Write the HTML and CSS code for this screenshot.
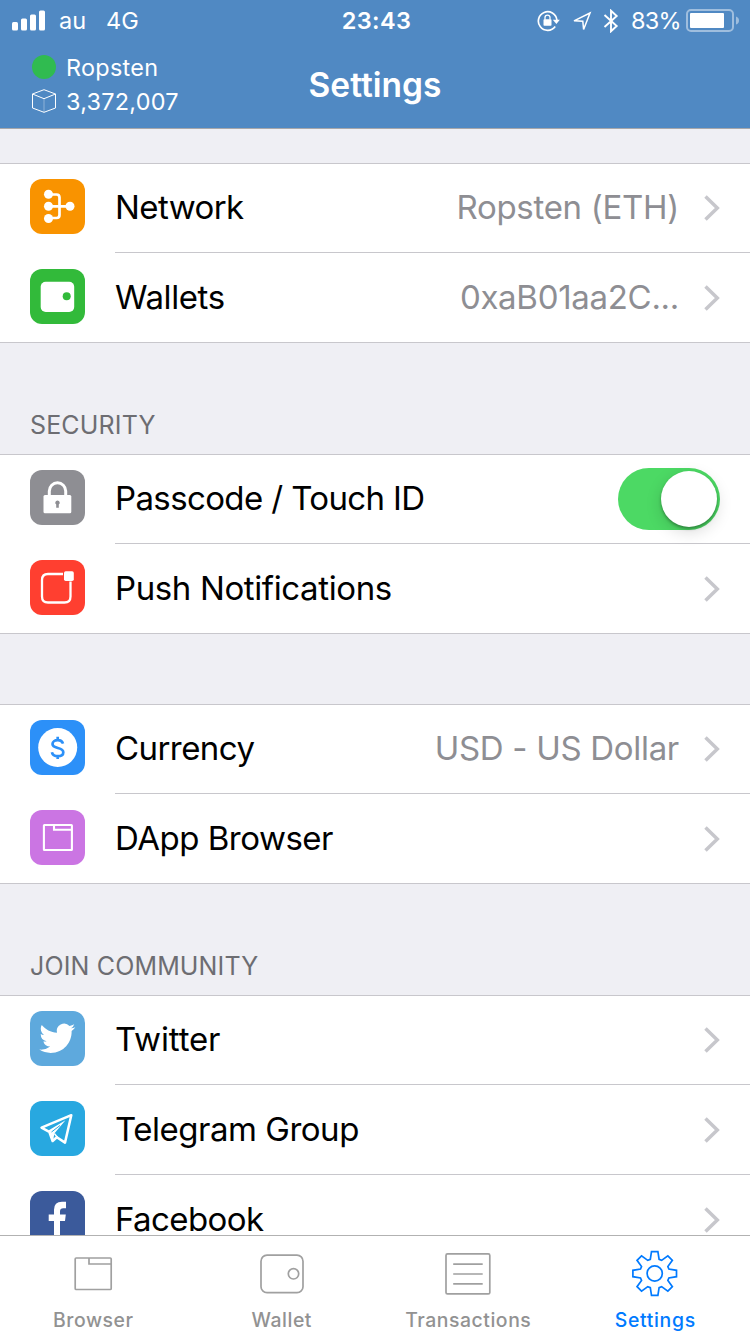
FILE: index.html
```html
<!DOCTYPE html>
<html lang="en">
<head>
<meta charset="utf-8">
<title>Settings</title>
<link rel="stylesheet" href="styles.css">
</head>
<body>
<div class="screen">
  <header class="header">
    <div class="status">
      <div class="status-left">
        <svg class="signal" width="34" height="21" viewBox="0 0 34 21" fill="#fff"><rect x="0" y="12" width="6" height="8.500" rx="1.500"/><rect x="9" y="8.500" width="6" height="12" rx="1.500"/><rect x="18" y="4.500" width="6" height="16" rx="1.500"/><rect x="27" y="0.500" width="6" height="20" rx="1.500"/></svg>
        <span class="carrier">au</span><span class="radio">4G</span>
      </div>
      <span class="clock">23:43</span>
      <div class="status-right">
        <svg class="lock-rot" width="24" height="22" viewBox="0 0 24 22"><path d="M18.200 16.500A9.300 9.300 0 1 1 19.900 10" fill="none" stroke="#fff" stroke-width="1.700"/><path d="M15.800 9.800h7l-3.400 4.200z" fill="#fff"/><rect x="6.500" y="9.300" width="8" height="6.500" rx="0.800" fill="#fff"/><path d="M8 9.800V7.600a2.500 2.500 0 0 1 5 0V9.800" fill="none" stroke="#fff" stroke-width="1.300"/></svg>
        <svg class="arrow" width="20" height="21" viewBox="0 0 20 21" fill="none" stroke="#fff" stroke-width="1.500"><path d="M18 2L2 9.800l8.800.400.800 8.300z"/></svg>
        <svg class="bluetooth" width="16" height="24" viewBox="0 0 16 24" fill="none" stroke="#fff" stroke-width="1.900"><path d="M1.500 6l12.200 11L8 22.300V1.700L13.700 7 1.500 18"/></svg>
        <span class="percent">83%</span>
        <svg class="battery" width="53" height="24" viewBox="0 0 53 24"><rect x="1" y="1" width="46" height="21" rx="4" fill="none" stroke="#fff" stroke-opacity=".45" stroke-width="2"/><rect x="4" y="4" width="34" height="15" rx="1" fill="#fff"/><path d="M50 7.500q3 1 3 4t-3 4z" fill="#fff" fill-opacity=".45"/></svg>
      </div>
    </div>
    <div class="nav">
      <div class="node">
        <div class="node-line"><i class="dot"></i><span class="node-name">Ropsten</span></div>
        <div class="node-line"><svg width="24" height="24" viewBox="0 0 24 24" fill="none" stroke="#fff" stroke-width="1"><path d="M12 .700L23.500 5v14L12 23.300.500 19V5zM.500 5L12 9.700 23.500 5"/><path d="M12 9.700v13.600" stroke-opacity=".35"/></svg><span class="node-block">3,372,007</span></div>
      </div>
      <h1 class="title">Settings</h1>
    </div>
  </header>

  <main class="content">
    <section class="group">
      <div class="row">
        <svg class="icon orange" viewBox="0 0 55 55"><g fill="none" stroke="#fff" stroke-width="2.700"><path d="M18 15.500h8.500q3 0 3 3v17.500q0 3-3 3H18M18 27.300h22"/></g><g fill="#fff"><circle cx="18.500" cy="15.300" r="4.500"/><circle cx="18.500" cy="27.300" r="4.500"/><circle cx="18.500" cy="39.500" r="4.500"/><circle cx="40" cy="27.300" r="4.500"/></g></svg>
        <div class="cell"><span class="label l-network">Network</span><span class="value v-network">Ropsten (ETH)</span><svg class="chevron" viewBox="0 0 16 26"><path d="M1.500 1.500L13.300 13 1.500 24.500"/></svg></div>
      </div>
      <div class="row">
        <svg class="icon green" viewBox="0 0 55 55"><rect x="10.700" y="12.700" width="33.500" height="30.300" rx="5" fill="#fff"/><circle cx="36.700" cy="27.300" r="4" fill="#32ba3a"/></svg>
        <div class="cell"><span class="label l-wallets">Wallets</span><span class="value v-wallets">0xaB01aa2C...</span><svg class="chevron" viewBox="0 0 16 26"><path d="M1.500 1.500L13.300 13 1.500 24.500"/></svg></div>
      </div>
    </section>

    <h2 class="heading h-security">SECURITY</h2>
    <section class="group">
      <div class="row">
        <svg class="icon gray" viewBox="0 0 55 55"><path d="M19.300 27v-6a8.200 8.200 0 0 1 16.400 0v6" fill="none" stroke="#fff" stroke-width="3"/><rect x="13.500" y="25" width="27.800" height="18.200" rx="1.500" fill="#fff"/><path d="M27.500 30.500a2.200 2.200 0 0 1 1.300 4v3.200h-2.600v-3.200a2.200 2.200 0 0 1 1.300-4z" fill="#8e8e93"/></svg>
        <div class="cell"><span class="label l-passcode">Passcode / Touch ID</span><span class="switch"><i class="knob"></i></span></div>
      </div>
      <div class="row">
        <svg class="icon red" viewBox="0 0 55 55"><path d="M33 14H18q-6 0-6 6v16.500q0 6 6 6h16.500q6 0 6-6V21.500" fill="none" stroke="#fff" stroke-width="2.300"/><rect x="34" y="11.300" width="9.800" height="9.600" rx="1.700" fill="#fff"/></svg>
        <div class="cell"><span class="label l-push">Push Notifications</span><svg class="chevron" viewBox="0 0 16 26"><path d="M1.500 1.500L13.300 13 1.500 24.500"/></svg></div>
      </div>
    </section>

    <section class="group spaced">
      <div class="row">
        <svg class="icon blue" viewBox="0 0 55 55"><circle cx="27.700" cy="27.500" r="19.500" fill="#fff"/><path transform="translate(0 2.200)" d="M33 21.500c-.700-2.300-2.600-3.500-5.300-3.500-3 0-5.200 1.500-5.200 3.800 0 5.300 10.800 2.700 10.800 8.200 0 2.500-2.300 4-5.500 4-3.200 0-5.300-1.400-5.900-4M27.700 14.500v3.500M27.700 34v2.700" fill="none" stroke="#2c90f8" stroke-width="2.700"/></svg>
        <div class="cell"><span class="label l-currency">Currency</span><span class="value v-currency">USD - US Dollar</span><svg class="chevron" viewBox="0 0 16 26"><path d="M1.500 1.500L13.300 13 1.500 24.500"/></svg></div>
      </div>
      <div class="row">
        <svg class="icon purple" viewBox="0 0 55 55"><g fill="none" stroke="#fff" stroke-width="2.100"><rect x="13.900" y="15" width="28" height="25" rx=".5"/><path d="M24 15v4.800h17.700"/></g></svg>
        <div class="cell"><span class="label l-dapp">DApp Browser</span><svg class="chevron" viewBox="0 0 16 26"><path d="M1.500 1.500L13.300 13 1.500 24.500"/></svg></div>
      </div>
    </section>

    <h2 class="heading h-community">JOIN COMMUNITY</h2>
    <section class="group">
      <div class="row">
        <svg class="icon twitter" viewBox="0 0 55 55"><path transform="translate(9.300 9.300) scale(1.500)" fill="#fff" d="M23.953 4.570a10 10 0 01-2.825.775 4.958 4.958 0 002.163-2.723c-.951.555-2.005.959-3.127 1.184a4.920 4.920 0 00-8.384 4.482C7.690 8.095 4.067 6.130 1.640 3.162a4.822 4.822 0 00-.666 2.475c0 1.710.870 3.213 2.188 4.096a4.904 4.904 0 01-2.228-.616v.060a4.923 4.923 0 003.946 4.827 4.996 4.996 0 01-2.212.085 4.936 4.936 0 004.604 3.417 9.867 9.867 0 01-6.102 2.105c-.390 0-.779-.023-1.170-.067a13.995 13.995 0 007.557 2.209c9.053 0 13.998-7.496 13.998-13.985 0-.210 0-.420-.015-.630A9.935 9.935 0 0024 4.590z"/></svg>
        <div class="cell"><span class="label l-twitter">Twitter</span><svg class="chevron" viewBox="0 0 16 26"><path d="M1.500 1.500L13.300 13 1.500 24.500"/></svg></div>
      </div>
      <div class="row">
        <svg class="icon telegram" viewBox="0 0 55 55"><path d="M41.300 14.200L11.500 26.600l7.800 4.200 3.300 9.200 4.200-3.700 8.200 5.300z" fill="none" stroke="#fff" stroke-width="2.500" stroke-linejoin="round"/><path d="M18.800 29.300L35.500 19.200 24.300 32.500 23 40.500z" fill="#fff"/><path d="M24.300 32.500l3.300 4" stroke="#fff" stroke-width="1.500"/><path d="M21.500 31l8.500-6.500" stroke="#28a8e0" stroke-width="1"/></svg>
        <div class="cell"><span class="label l-telegram">Telegram Group</span><svg class="chevron" viewBox="0 0 16 26"><path d="M1.500 1.500L13.300 13 1.500 24.500"/></svg></div>
      </div>
      <div class="row">
        <svg class="icon facebook" viewBox="0 0 55 55"><path d="M24 55V30h-5.300v-6.500H24v-4.700q0-8 8-8h4v6.400h-2.700q-3.300 0-3.300 3v3.300h5.800L35 30h-5v25z" fill="#fff"/></svg>
        <div class="cell"><span class="label l-facebook">Facebook</span><svg class="chevron" viewBox="0 0 16 26"><path d="M1.500 1.500L13.300 13 1.500 24.500"/></svg></div>
      </div>
    </section>
  </main>

  <nav class="tabs">
    <div class="tab"><svg width="48" height="48" viewBox="0 0 48 48"><rect x="5.200" y="8" width="36" height="31.500" rx="1"/><path d="M19 8v6h22.300"/></svg><span class="t-browser">Browser</span></div>
    <div class="tab"><svg width="48" height="48" viewBox="0 0 48 48"><rect x="4" y="5.200" width="42" height="37.500" rx="6"/><circle cx="36.500" cy="23.800" r="5.200"/></svg><span class="t-wallet">Wallet</span></div>
    <div class="tab"><svg width="48" height="48" viewBox="0 0 48 48"><rect x="1" y="3.900" width="43.800" height="40" rx="1.500"/><path d="M8.200 14.200h29.500M8.200 24h29.500M8.200 33.800h29.500"/></svg><span class="t-transactions">Transactions</span></div>
    <div class="tab active"><svg width="48" height="48" viewBox="-22.700 -23.500 48 48"><path d="M-3.200-21.800H3.200L4.400-14.200 6.930-13.150 13.150-17.680 17.680-13.150 13.150-6.930 14.200-4.400 21.800-3.200V3.200L14.200 4.400 13.150 6.930 17.680 13.150 13.150 17.680 6.930 13.150 4.400 14.200 3.200 21.800H-3.200L-4.400 14.200-6.930 13.150-13.150 17.680-17.680 13.150-13.150 6.930-14.200 4.400-21.800 3.200V-3.200L-14.200-4.400-13.150-6.930-17.680-13.150-13.150-17.680-6.930-13.150-4.400-14.200z"/><circle r="7.600"/></svg><span class="t-settings">Settings</span></div>
  </nav>
</div>
</body>
</html>
```
FILE: styles.css
```css
* { box-sizing: border-box; margin: 0; padding: 0; }
body { font-family: Inter, "Liberation Sans", sans-serif; background: #efeff4; }
svg { display: block; flex: none; }
.screen { width: 750px; height: 1334px; display: flex; flex-direction: column; overflow: hidden; }

.header { height: 129px; flex: none; background: #5089c3; color: #fff; border-bottom: 1px solid #a7a7aa; }
.status { height: 40px; display: grid; grid-template-columns: 1fr auto 1fr; align-items: center; font-size: 23.500px; line-height: 40px; padding-top: 1px; }
.status-left, .status-right { display: flex; align-items: center; }
.status-left { padding-left: 12px; }
.status-right { justify-content: flex-end; padding-right: 11px; }
.signal { margin-top: -1px; }
.carrier { margin-left: 13px; }
.radio { margin-left: 20px; }
.clock { font-weight: 600; letter-spacing: .400px; padding-left: 3px; }
.lock-rot { margin-top: -1px; }
.arrow { margin-left: 11px; }
.bluetooth { margin-left: 11px; }
.percent { margin-left: 12px; letter-spacing: -.700px; }
.battery { margin-left: 5px; }

.nav { height: 88px; display: grid; grid-template-columns: 1fr auto 1fr; align-items: center; }
.node { padding: 0 0 0 32px; }
.node-line { height: 34px; display: flex; align-items: center; gap: 10px; font-size: 23.400px; line-height: 34px; }
.node-name { letter-spacing: .300px; margin-top: 2px; }
.node-block { letter-spacing: .250px; margin-top: 2px; }
.dot { width: 24px; height: 24px; border-radius: 50%; background: #30bb50; }
.title { font-size: 33.500px; font-weight: 600; line-height: 40px; padding-top: 1px; }

.content { flex: 1; min-height: 0; overflow: hidden; padding-top: 34px; }
.group { background: #fff; border-bottom: 1px solid #c8c7cc; box-shadow: inset 0 1px #c8c7cc; }
.spaced { margin-top: 70px; }
.row { height: 90px; display: flex; padding-left: 30px; }
.row:last-child { height: 89px; }
.icon { width: 55px; height: 55px; margin: 16px 30px 0 0; border-radius: 12px; }
.orange { background: #f99300; }
.green { background: #32ba3a; }
.gray { background: #8e8e93; }
.red { background: #ff3f30; }
.blue { background: #2c90f8; }
.purple { background: #cb75e3; }
.twitter { background: #5ea9dd; }
.telegram { background: #28a8e0; }
.facebook { background: #3b5a9b; }
.cell { flex: 1; display: flex; align-items: center; border-bottom: 1px solid #c8c7cc; padding-right: 30px; }
.row:last-child .cell { border-bottom: 0; }
.label, .value { font-size: 33px; line-height: 38px; padding-bottom: 2px; white-space: nowrap; }
.label { color: #000; flex: 1; }
.value { color: #8e8e93; margin-right: 25px; }
.l-network, .l-currency { letter-spacing: -.570px; }
.l-wallets { letter-spacing: -.400px; }
.l-passcode { letter-spacing: -.620px; }
.l-push { letter-spacing: -.380px; }
.l-dapp { letter-spacing: -.490px; }
.l-twitter { letter-spacing: -.150px; }
.l-telegram { letter-spacing: -.480px; }
.l-facebook { letter-spacing: -.600px; }
.value { letter-spacing: -.300px; }
.chevron { width: 16px; height: 26px; fill: none; stroke: #c7c7cc; stroke-width: 3.500; }
.switch { width: 102px; height: 62px; border-radius: 31px; background: #4cd964; padding: 3px 3px 3px 43px; margin-top: 1px; }
.knob { display: block; width: 56px; height: 56px; border-radius: 50%; background: #fff; box-shadow: 0 2px 3px rgba(0,0,0,.3), 0 5px 16px rgba(0,0,0,.15); }

.heading { height: 111px; padding: 65px 0 0 30px; font-size: 25px; font-weight: 400; line-height: 34px; letter-spacing: .150px; color: #6d6d72; }

.tabs { height: 99px; flex: none; background: #fff; border-top: 1px solid #b2b2b2; display: grid; grid-template-columns: repeat(4, 1fr); }
.tab { display: flex; flex-direction: column; align-items: center; padding-top: 14px; font-size: 19.400px; font-weight: 500; line-height: 24px; color: #929292; }
.tab span { margin: 10px 1px 0 0; letter-spacing: .550px; }
.tab .t-wallet { margin: 10px 0 0 1px; }
.tab .t-settings { letter-spacing: .700px; margin-right: 2px; }
.tab svg { fill: none; stroke: #a0a0a0; stroke-width: 1.700; }
.tab.active { color: #007aff; }
.tab.active svg { stroke: #007aff; }
```
